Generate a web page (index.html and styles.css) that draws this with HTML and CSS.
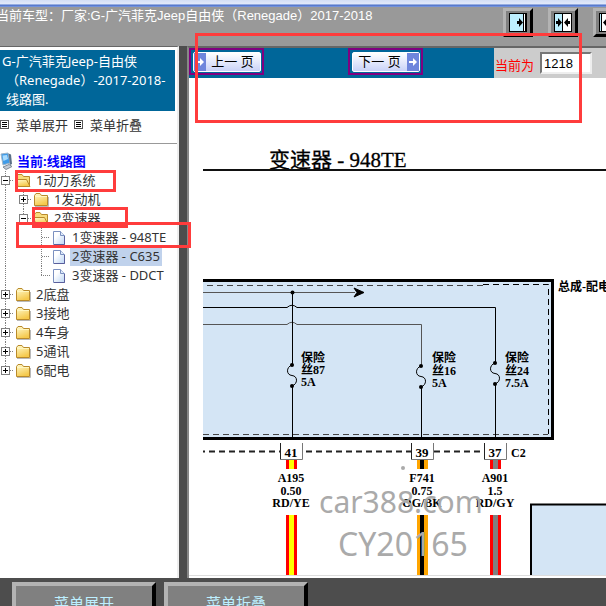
FILE: index.html
```html
<!DOCTYPE html>
<html lang="zh-CN">
<head>
  <meta charset="utf-8">
  <title>线路图</title>
  <link rel="stylesheet" href="styles.css">
</head>
<body>
  <!-- Tree icons -->
  <svg class="icon-defs" width="0" height="0">
    <defs>
      <linearGradient id="gold" x1="0" y1="0" x2="0.4" y2="1">
        <stop offset="0" stop-color="#fffbd0"/>
        <stop offset="1" stop-color="#f5c94c"/>
      </linearGradient>
      <linearGradient id="sheet" x1="0" y1="0" x2="1" y2="1">
        <stop offset="0.3" stop-color="#ffffff"/>
        <stop offset="1" stop-color="#bcd6f5"/>
      </linearGradient>
      <symbol id="line" viewBox="0 0 18 19">
        <path class="dots" d="M9.5 0V19"/>
      </symbol>
      <symbol id="join" viewBox="0 0 18 19">
        <path class="dots" d="M9.5 0V19M10 9.5H18"/>
      </symbol>
      <symbol id="joinbottom" viewBox="0 0 18 19">
        <path class="dots" d="M9.5 0V9M9 9.5H18"/>
      </symbol>
      <symbol id="plus" viewBox="0 0 18 19">
        <path class="dots" d="M9.5 0V19M14 9.5H18"/>
        <rect x="5.5" y="5.5" width="8" height="8" fill="#fff" stroke="#808080"/>
        <path d="M7 9.5H12M9.5 7V12" stroke="#000"/>
      </symbol>
      <symbol id="plusbottom" viewBox="0 0 18 19">
        <path class="dots" d="M9.5 0V5M14 9.5H18"/>
        <rect x="5.5" y="5.5" width="8" height="8" fill="#fff" stroke="#808080"/>
        <path d="M7 9.5H12M9.5 7V12" stroke="#000"/>
      </symbol>
      <symbol id="minus" viewBox="0 0 18 19">
        <path class="dots" d="M9.5 0V19M14 9.5H18"/>
        <rect x="5.5" y="5.5" width="8" height="8" fill="#fff" stroke="#808080"/>
        <path d="M7 9.5H12" stroke="#000"/>
      </symbol>
      <symbol id="minusbottom" viewBox="0 0 18 19">
        <path class="dots" d="M9.5 0V5M14 9.5H18"/>
        <rect x="5.5" y="5.5" width="8" height="8" fill="#fff" stroke="#808080"/>
        <path d="M7 9.5H12" stroke="#000"/>
      </symbol>
      <symbol id="folder" viewBox="0 0 18 19">
        <path d="M3 16.5H16.5V7" fill="none" stroke="#b9b9b9"/>
        <path d="M2.5 15.5V5.5L4 3.5H8L9.5 5.5H15.5V15.5Z" fill="url(#gold)" stroke="#b98a2a"/>
        <path d="M3 6.5H15" stroke="#fff7c0"/>
      </symbol>
      <symbol id="folderopen" viewBox="0 0 18 19">
        <path d="M2.5 15.5V5.5L4 3.5H8L9.5 5.5H15.5V15.5Z" fill="#f7dc7c" stroke="#b98a2a"/>
        <path d="M4 15.5L1.5 8.5H12.5L16 15.5Z" fill="url(#gold)" stroke="#b98a2a"/>
      </symbol>
      <symbol id="page" viewBox="0 0 18 19">
        <path d="M3.5 3.5H10.5L14.5 7.5V16.5H3.5Z" fill="url(#sheet)" stroke="#7b90c0"/>
        <path d="M10.5 3.5V7.5H14.5" fill="#dfeafa" stroke="#7b90c0"/>
        <path d="M4 16.5H14.5V8" fill="none" stroke="#5a5f9c"/>
      </symbol>
      <symbol id="computer" viewBox="0 0 18 19">
        <path d="M5 2L12 1L14 11L7 13Z" fill="#3f9be8" stroke="#9db4c8"/>
        <path d="M6.500 3.500L11 3L12 7L7.500 9Z" fill="#a8dcff"/>
        <path d="M12.500 1.500L15 2.500L16 12L14 13Z" fill="#5b7086"/>
        <path d="M7 15L13 12.500L16 14.500L10 17.500Z" fill="#c5ccd6" stroke="#7e8996"/>
      </symbol>
      <symbol id="list" viewBox="0 0 9 9">
        <rect x="0.5" y="0.5" width="8" height="8" fill="#fff" stroke="#555"/>
        <path d="M2 2.500H7M2 4.500H7M2 6.500H7" stroke="#000"/>
      </symbol>
    </defs>
  </svg>

  <div class="window-edge"></div>

  <header class="header">
    <div class="car">当前车型：厂家:G-广汽菲克Jeep自由侠（Renegade）2017-2018</div>
    <div class="view-buttons">
      <button class="bevel view-button" aria-label="左侧全宽">
        <svg width="18" height="19" viewBox="0 0 18 19">
          <rect width="18" height="19" fill="#000"/>
          <rect x="1" y="1" width="13" height="17" fill="#bdefff"/>
          <rect x="15" y="1" width="1" height="17" fill="#fff"/>
          <path d="M8 8H10V5L14 9.500L10 14V11H8Z" fill="#000"/>
        </svg>
      </button>
      <button class="bevel view-button" aria-label="左右平分">
        <svg width="18" height="19" viewBox="0 0 18 19">
          <rect width="18" height="19" fill="#000"/>
          <rect x="1" y="1" width="7" height="17" fill="#bdefff"/>
          <rect x="9" y="1" width="8" height="17" fill="#fff"/>
          <path d="M2 8H4V5L8 9.500L4 14V11H2ZM16 8H14V5L10 9.500L14 14V11H16Z" fill="#000"/>
        </svg>
      </button>
      <button class="bevel view-button" aria-label="右侧全宽">
        <svg width="18" height="19" viewBox="0 0 18 19">
          <rect width="18" height="19" fill="#000"/>
          <rect x="1" y="1" width="1" height="17" fill="#bdefff"/>
          <rect x="3" y="1" width="14" height="17" fill="#fff"/>
          <path d="M10 8H8V5L4 9.500L8 14V11H10Z" fill="#000"/>
        </svg>
      </button>
    </div>
  </header>

  <div class="main">
    <nav class="sidebar">
      <h1 class="sidebar-title">G-广汽菲克Jeep-自由侠（Renegade）-2017-2018-线路图.</h1>
      <div class="menu">
        <a href="#"><svg width="9" height="9"><use href="#list"/></svg>菜单展开</a>
        <a href="#"><svg width="9" height="9"><use href="#list"/></svg>菜单折叠</a>
      </div>

      <ul class="tree">
        <li><svg class="cell"><use href="#computer"/></svg><a class="root" href="#">当前:线路图</a></li>
        <li><svg class="cell"><use href="#minus"/></svg><svg class="cell"><use href="#folderopen"/></svg><a href="#">1动力系统</a></li>
        <li><svg class="cell"><use href="#line"/></svg><svg class="cell"><use href="#plus"/></svg><svg class="cell"><use href="#folder"/></svg><a href="#">1发动机</a></li>
        <li><svg class="cell"><use href="#line"/></svg><svg class="cell"><use href="#minusbottom"/></svg><svg class="cell"><use href="#folderopen"/></svg><a href="#">2变速器</a></li>
        <li><svg class="cell"><use href="#line"/></svg><span class="cell"></span><svg class="cell"><use href="#join"/></svg><svg class="cell"><use href="#page"/></svg><a href="#">1变速器 - 948TE</a></li>
        <li><svg class="cell"><use href="#line"/></svg><span class="cell"></span><svg class="cell"><use href="#join"/></svg><svg class="cell"><use href="#page"/></svg><a class="selected" href="#">2变速器 - C635</a></li>
        <li><svg class="cell"><use href="#line"/></svg><span class="cell"></span><svg class="cell"><use href="#joinbottom"/></svg><svg class="cell"><use href="#page"/></svg><a href="#">3变速器 - DDCT</a></li>
        <li><svg class="cell"><use href="#plus"/></svg><svg class="cell"><use href="#folder"/></svg><a href="#">2底盘</a></li>
        <li><svg class="cell"><use href="#plus"/></svg><svg class="cell"><use href="#folder"/></svg><a href="#">3接地</a></li>
        <li><svg class="cell"><use href="#plus"/></svg><svg class="cell"><use href="#folder"/></svg><a href="#">4车身</a></li>
        <li><svg class="cell"><use href="#plus"/></svg><svg class="cell"><use href="#folder"/></svg><a href="#">5通讯</a></li>
        <li><svg class="cell"><use href="#plusbottom"/></svg><svg class="cell"><use href="#folder"/></svg><a href="#">6配电</a></li>
      </ul>
    </nav>

    <main class="content">
      <div class="toolbar">
        <div class="pager">
          <button class="page-button">
            <span class="face"><svg width="12" height="18" viewBox="0 0 12 18"><rect width="12" height="18" fill="#6f86dc"/><path d="M2 8H6V5L10 9L6 13V10H2Z" fill="#fff"/></svg><span class="label">上一 页</span></span>
          </button>
          <button class="page-button">
            <span class="face"><span class="label">下一 页</span><svg width="12" height="18" viewBox="0 0 12 18"><rect width="12" height="18" fill="#6f86dc"/><path d="M2 8H6V5L10 9L6 13V10H2Z" fill="#fff"/></svg></span>
          </button>
        </div>
        <div class="current">
          <label for="page-number">当前为</label>
          <input id="page-number" type="text" value="1218">
        </div>
      </div>

      <div class="diagram">
        <svg width="640" height="498" viewBox="0 0 640 498">
          <text class="heading" x="80" y="89">变速器 - 948TE</text>
          <path d="M14 92H640" stroke="#111" stroke-width="2"/>

          <!-- Power distribution box -->
          <rect x="14" y="202" width="350" height="159" fill="#d4e5f5"/>
          <path d="M14 202.500H363.500V360.500H14" fill="none" stroke="#000" stroke-width="3"/>
          <path d="M18 207.500H294M14 356.500H359" stroke="#444" stroke-dasharray="6 4"/>
          <path d="M294 206.500H359.500V356" fill="none" stroke="#000" stroke-dasharray="6 4"/>
          <text x="369" y="213">总成-配电</text>

          <g class="wire">
            <path d="M14 214.500H166" stroke="#555"/>
            <path d="M165 210L175 214.500L165 219L168 214.500Z" fill="#000"/>
            <path d="M14 229.500H98Q103 225 108 229.500H306.500V285"/>
            <path d="M14 246.500H98Q103 242 108 246.500H232.500V288" stroke="#555"/>
            <path d="M103.500 214V287M103.500 308V360M232.500 309V360M306.500 306V360"/>
            <path d="M103 287C97 289 97 297 103 297.500S109 306 103 308"/>
            <path d="M232 288C226 290 226 298 232 298.500S238 307 232 309"/>
            <path d="M306 285C300 287 300 295 306 295.500S312 304 306 306"/>
          </g>
          <g fill="#000">
            <circle cx="103.500" cy="214.500" r="2"/>
            <circle cx="103" cy="287" r="2"/><circle cx="103" cy="308" r="2"/>
            <circle cx="232" cy="288" r="2"/><circle cx="232" cy="309" r="2"/>
            <circle cx="306" cy="285" r="2"/><circle cx="306" cy="306" r="2"/>
          </g>
          <text><tspan x="112" y="284">保险</tspan><tspan x="112" y="296">丝87</tspan><tspan x="112" y="308">5A</tspan></text>
          <text><tspan x="243" y="284">保险</tspan><tspan x="243" y="297">丝16</tspan><tspan x="243" y="309">5A</tspan></text>
          <text><tspan x="316" y="284">保险</tspan><tspan x="316" y="297">丝24</tspan><tspan x="316" y="309">7.5A</tspan></text>

          <!-- Connector C2 -->
          <path d="M14 373.500H16M20 373.500H91M117 373.500H222M245 373.500H295" stroke="#222" stroke-width="2" stroke-dasharray="6 4"/>
          <path d="M91.500 365V381M222.500 365V381M295.500 365V381" stroke="#222"/>
          <path d="M91 381.500H113.500V365M222 381.500H244.500V365M295 381.500H317.500V365" fill="none" stroke="#777"/>
          <g class="pin">
            <text x="102" y="379">41</text>
            <text x="233" y="379">39</text>
            <text x="306" y="379">37</text>
          </g>
          <text x="322" y="379">C2</text>

          <path d="M97 382H108V391H97ZM97 437H108V498H97ZM301 382H312V391H301ZM301 437H312V498H301Z" fill="#f00"/>
          <path d="M100 382H105V391H100ZM100 437H105V498H100Z" fill="#ff0"/>
          <path d="M228 382H239V391H228ZM228 437H239V498H228Z" fill="#ffa500"/>
          <path d="M231 382H235V391H231ZM231 437H235V498H231Z" fill="#000"/>
          <path d="M304 382H309V391H304ZM304 437H309V498H304Z" fill="#808080"/>

          <g class="wire-label">
            <text><tspan x="102" y="404">A195</tspan><tspan x="102" y="417">0.50</tspan><tspan x="102" y="429">RD/YE</tspan></text>
            <text><tspan x="233" y="404">F741</tspan><tspan x="233" y="417">0.75</tspan><tspan x="233" y="429">OG/BK</tspan></text>
            <text><tspan x="306" y="404">A901</tspan><tspan x="306" y="417">1.5</tspan><tspan x="306" y="429">RD/GY</tspan></text>
          </g>

          <path d="M342 499V426.500H640V499" fill="#d4e5f5" stroke="#000" stroke-width="2"/>

          <g class="watermark">
            <circle cx="214" cy="390" r="2"/>
            <text class="site" x="130" y="435">car388.com</text>
            <text class="serial" x="149" y="478">CY20165</text>
          </g>
        </svg>
      </div>
    </main>

    <div class="mark mark-system"></div>
    <div class="mark mark-gearbox"></div>
    <div class="mark mark-item"></div>
    <div class="mark mark-pager"></div>
  </div>

  <footer class="footer">
    <button class="bevel footer-button">菜单展开</button>
    <button class="bevel footer-button">菜单折叠</button>
  </footer>
</body>
</html>
```
FILE: styles.css
```css
* {
  box-sizing: border-box;
}

body {
  display: flex;
  flex-direction: column;
  height: 100vh;
  margin: 0;
  overflow: hidden;
  background-color: #4d4d4d;
  font-family: "Noto Sans", "Noto Sans CJK SC", sans-serif;
  font-size: 13px;
}

button {
  padding: 0;
  cursor: pointer;
}

a {
  color: #333;
  text-decoration: none;
}

.icon-defs {
  position: absolute;
}

.dots {
  fill: none;
  stroke: #808080;
  stroke-dasharray: 1 1;
}

.bevel {
  border: 3px solid #b3b3b3;
  border-right-color: #000;
  border-bottom-color: #000;
  background-color: #808080;
}

/* Top of the window */
.window-edge {
  flex: none;
  height: 7px;
  background: linear-gradient(#d3def5, #e3eafa 4px, #4a6fc8 5px, #7f9be0 7px);
}

.header {
  display: flex;
  flex: none;
  height: 39px;
  background-color: #999;
  color: #fff;
  font-family: "Liberation Sans", "Noto Sans CJK SC", sans-serif;
}

.car {
  flex: 0 0 504px;
  margin-left: -4px;
  line-height: 17px;
  white-space: nowrap;
}

.view-buttons {
  display: flex;
  gap: 15px;
  padding: 1px 0 0 3px;
}

.view-button {
  display: flex;
  flex: none;
  align-items: center;
  justify-content: center;
  width: 30px;
  height: 29px;
}

.main {
  display: flex;
  flex: 1;
  min-height: 0;
  position: relative;
}

/* Sidebar */
.sidebar {
  flex: 0 0 179px;
  padding-top: 3px;
  overflow: hidden;
  border-top: 1px solid #666;
  border-right: 2px solid #eee;
  background-color: #fff;
}

.sidebar-title {
  width: 175px;
  margin: 0;
  padding: 2px 4px 2px 6px;
  background-color: #069;
  color: #fff;
  font-size: 13px;
  font-weight: normal;
  line-height: 19px;
  text-indent: -4px;
}

.menu {
  display: flex;
  gap: 6px;
  height: 33px;
  border-bottom: 1px solid #999;
}

.menu a {
  display: flex;
  gap: 7px;
  align-items: center;
  height: 27px;
}

.tree {
  margin: 8px 0 0 -4px;
  padding: 0;
  list-style: none;
}

.tree li {
  display: flex;
  height: 19px;
  white-space: nowrap;
}

.tree a {
  margin-left: 2px;
  padding: 0 2px;
  line-height: 19px;
}

.tree .root {
  margin-left: 1px;
  color: #00f;
  font-weight: bold;
}

.tree .selected {
  background-color: #c0d2ec;
}

.cell {
  flex: none;
  width: 18px;
  height: 19px;
}

/* Content pane */
.content {
  display: flex;
  flex: 1;
  flex-direction: column;
  min-width: 0;
  margin-left: 8px;
  border-top: 2px solid #666;
  border-left: 2px solid #888;
  background-color: #fff;
}

.toolbar {
  display: flex;
  flex: none;
  height: 30px;
}

.pager {
  display: flex;
  flex: 0 0 305px;
  gap: 84px;
  align-items: flex-start;
  background-color: #069;
}

.page-button {
  display: flex;
  align-items: center;
  justify-content: center;
  width: 75px;
  height: 27px;
  border: 2px solid #800080;
  background-color: #069;
}

.face {
  display: flex;
  align-items: center;
  width: 68px;
  height: 20px;
  border: 1px solid #fff;
  border-radius: 2px;
  background: linear-gradient(#fff, #c9d2f8);
}

.label {
  flex: 1;
  color: #000;
  font-family: "Liberation Sans", "Noto Sans CJK SC", sans-serif;
  font-size: 13px;
  line-height: 18px;
  white-space: nowrap;
}

.current {
  display: flex;
  flex: 1;
  gap: 6px;
  align-items: center;
  background-color: #ccc;
  color: #f00;
}

.current label {
  flex: none;
  padding: 2px 0 0 1px;
}

.current input {
  flex: none;
  width: 52px;
  height: 22px;
  padding: 1px 2px;
  border: 2px solid #eee;
  border-top-color: #777;
  border-left-color: #777;
  background-color: #fff;
  color: #000;
  font-family: "Liberation Sans", sans-serif;
  font-size: 13px;
}

/* Wiring diagram */
.diagram {
  flex: 1;
  min-height: 0;
  margin-bottom: 2px;
  overflow: hidden;
  border-bottom: 1px solid #ddd;
}

.diagram svg {
  display: block;
}

.diagram text {
  font-family: "Liberation Serif", "Noto Sans CJK SC", serif;
  font-size: 12px;
  font-weight: bold;
}

.diagram .heading {
  font-size: 21px;
  font-weight: normal;
  stroke: #000;
  stroke-width: 0.3px;
}

.wire {
  fill: none;
  stroke: #000;
}

.diagram .pin text,
.wire-label text {
  text-anchor: middle;
}

.diagram .pin text {
  font-size: 13px;
}

.watermark {
  fill: #aaa;
}

.diagram .watermark text {
  font-family: "Noto Sans", sans-serif;
  font-weight: normal;
}

.diagram .watermark .site {
  font-size: 30px;
}

.diagram .watermark .serial {
  font-size: 32px;
}

/* Red highlight frames drawn over the page */
.mark {
  position: absolute;
  border: 3px solid #ff3c3c;
  pointer-events: none;
}

.mark-system {
  top: 124px;
  left: 15px;
  width: 101px;
  height: 22px;
}

.mark-gearbox {
  top: 161px;
  left: 32px;
  width: 96px;
  height: 21px;
}

.mark-item {
  top: 176px;
  left: 16px;
  width: 175px;
  height: 26px;
}

.mark-pager {
  top: -13px;
  left: 195px;
  width: 387px;
  height: 90px;
}

/* Bottom bar */
.footer {
  display: flex;
  flex: none;
  gap: 8px;
  height: 28px;
  padding: 4px 12px 0;
  overflow: hidden;
}

.footer-button {
  flex: none;
  width: 144px;
  height: 40px;
  border-width: 4px;
  color: #bdefff;
  font-family: "Liberation Sans", "Noto Sans CJK SC", sans-serif;
  font-size: 15px;
}
```
